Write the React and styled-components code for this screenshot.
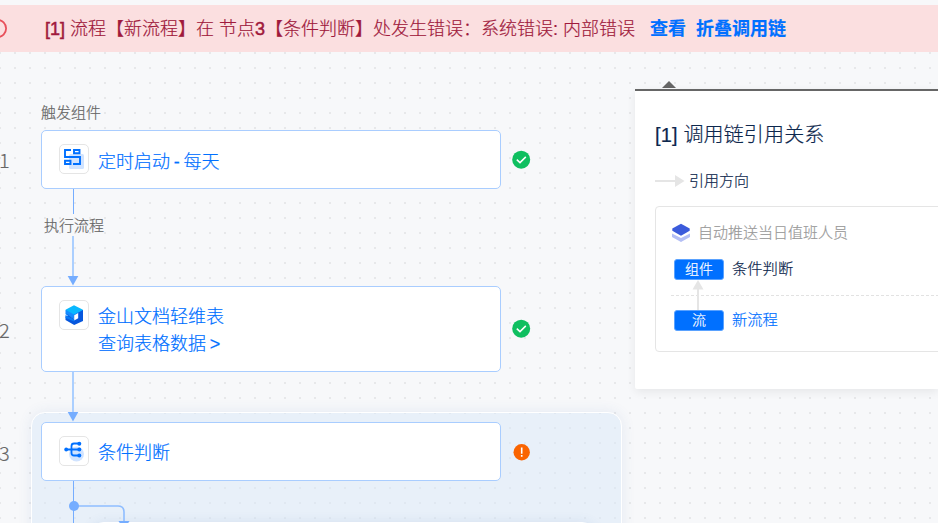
import React from 'react'
import styled, { createGlobalStyle } from 'styled-components';

const GlobalStyle = createGlobalStyle`
  * {
    box-sizing: border-box;
  }
  body {
    margin: 0;
    overflow: hidden;
    background-color: #f7f8fa;
    font-family: "Liberation Sans", "Noto Sans CJK SC", sans-serif;
    font-weight: 300;
    -webkit-text-stroke: 0.2px currentColor;
  }
  svg {
    display: block;
    flex: none;
  }
`
const Page = styled.div`
  width: 938px;
  height: 523px;
  padding-top: 5px;
  overflow: hidden;
`
const Banner = styled.div`
  height: 47px;
  display: flex;
  align-items: center;
  background-color: #fbdfe0;
  color: #a0193c;
  font-size: 18px;
  line-height: 26px;
  white-space: pre;
`
const BannerText = styled.div`
  width: 605px;
  margin-left: 37px;
  b {
    font-weight: 400;
    -webkit-text-stroke: 0.5px currentColor;
  }
`
const BannerLink = styled.a`
  margin-right: 10px;
  color: #0070ff;
  font-weight: 700;
`
const Canvas = styled.main`
  height: 471px;
  display: flex;
  align-items: flex-start;
  background-image: radial-gradient(circle at 1px 1px, #e7e8ea 1px, transparent 1.4px);
  background-size: 15px 15px;
  background-position: -1px 0;
`
const Flow = styled.div`
  width: 635px;
  padding-top: 47px;
`
const FlowLabel = styled.div`
  height: ${(props) => props.$height}px;
  padding-left: ${(props) => props.$left}px;
  color: #666;
  font-size: 15px;
  line-height: ${(props) => props.$height}px;
`
const TriggerLabel = styled(FlowLabel)`
  margin-bottom: 4px;
`
const StageLabel = styled(FlowLabel)`
  padding-top: 1px;
`
const Step = styled.div`
  display: grid;
  grid-template-columns: 41px 460px 1fr;
  align-items: center;
`
const StepNumber = styled.div`
  margin-left: -1px;
  padding-top: ${(props) => props.$top || 0}px;
  color: #666;
  font-family: "Noto Sans CJK SC", sans-serif;
  font-size: 20px;
  line-height: 26px;
`
const Card = styled.div`
  height: ${(props) => props.$height}px;
  padding: 13px 17px;
  display: flex;
  gap: 9px;
  background-color: #fff;
  border: 1px solid #a9cdff;
  border-radius: 5px;
`
const IconBox = styled.div`
  width: 30px;
  height: 30px;
  display: flex;
  align-items: center;
  justify-content: center;
  border: 1px solid #e5e5e5;
  border-radius: 5px;
`
const CardTitle = styled.div`
  padding-top: ${(props) => props.$top}px;
  color: #0070ff;
  font-size: 18px;
  line-height: 27px;
  word-spacing: -1.2px;
`
const Status = styled.div`
  padding-left: 11px;
`
const Connector = styled.svg`
  margin-left: 64px;
  margin-bottom: ${(props) => props.$overlap || 0}px;
  position: relative;
  z-index: 1;
`
const Group = styled.section`
  width: 591px;
  height: 150px;
  margin-left: 31px;
  padding-top: 9px;
  background-color: rgba(217, 232, 248, 0.5);
  border: 1px solid #fff;
  border-radius: 14px;
  box-shadow: 0 0 14px rgba(60, 100, 170, 0.1);
`
const GroupStep = styled(Step)`
  margin-left: -32px;
`
const Branch = styled.div`
  height: 60px;
  display: flex;
`
const BranchLines = styled.svg`
  margin-left: 32px;
  position: relative;
  z-index: 1;
`
const BranchGroup = styled.div`
  width: 506px;
  height: 30px;
  margin: 41px 0 0 -54px;
  background-color: rgba(219, 232, 248, 0.5);
  border: 1px solid #fff;
  border-radius: 14px;
  box-shadow: 0 0 12px rgba(60, 100, 170, 0.1);
`
const ChainPopup = styled.aside`
  width: 303px;
  padding-top: 29px;
`
const PopupArrow = styled.div`
  width: 0;
  height: 0;
  margin-left: 27px;
  border: 7px solid transparent;
  border-top: 0;
  border-bottom-color: #666;
`
const Popup = styled.div`
  height: 300px;
  margin-top: 1px;
  padding: 28px 0 0 20px;
  background-color: #fff;
  border-top: 2px solid #666;
  border-radius: 0 0 0 2px;
  box-shadow: 0 3px 10px rgba(0, 0, 0, 0.07);
  color: #0d274d;
`
const PopupTitle = styled.div`
  height: 32px;
  font-size: 20px;
  line-height: 32px;
  letter-spacing: 0.15px;
  white-space: pre;
`
const Direction = styled.div`
  height: 20px;
  margin-top: 20px;
  display: flex;
  align-items: center;
  gap: 4px;
  font-size: 15px;
  line-height: 20px;
`
const Label = styled.span`
  padding-bottom: ${(props) => props.$lift || 4}px;
`
const ChainBox = styled.div`
  width: 320px;
  height: 146px;
  margin-top: 15px;
  padding: 15px 15px 0;
  border: 1px solid #e5e5e5;
  border-radius: 4px;
`
const ChainName = styled.div`
  height: 22px;
  margin-bottom: 15px;
  display: flex;
  align-items: center;
  gap: 7px;
  color: #999;
  font-size: 15px;
`
const ChainRow = styled.div`
  height: 21px;
  padding-left: 3px;
  display: flex;
  align-items: center;
  gap: 8px;
  color: ${(props) => props.$color};
  font-size: 15.3px;
`
const Tag = styled.span`
  width: 50px;
  height: 21px;
  background-color: #0070ff;
  border: 1px solid #5aa2ff;
  border-radius: 3px;
  color: #fff;
  font-size: 14px;
  line-height: 19px;
  text-align: center;
`
const ChainLink = styled.div`
  height: 30px;
  padding-left: 21px;
  background: repeating-linear-gradient(90deg, #e2e2e2 0 3px, transparent 3px 5px) 0 15px / 100% 1px no-repeat;
`

const ErrorIcon = () => (
  <svg width="8" height="20" viewBox="0 0 8 20">
    <circle cx="-2.5" cy="9.5" r="8.6" fill="none" stroke="#e8505b" strokeWidth="1.8" />
  </svg>
)

const SuccessIcon = () => (
  <svg width="20" height="20" viewBox="0 0 20 20">
    <circle cx="9.2" cy="9.7" r="9" fill="#0fbf60" />
    <path d="M4.8 9.6 8 12.6 13.8 6.9" fill="none" stroke="#fff" strokeWidth="1.5" />
  </svg>
)

const WarningIcon = () => (
  <svg width="20" height="20" viewBox="0 0 20 20">
    <circle cx="9.7" cy="10.3" r="8.2" fill="#fa6400" />
    <path d="M9.7 5.5v6.2M9.7 13v1.8" stroke="#fff" strokeWidth="1.6" />
  </svg>
)

const TimerIcon = () => (
  <svg width="28" height="28" viewBox="0 0 28 28">
    <rect x="9" y="9" width="15" height="15" rx="1.5" fill="#d0e3ff" />
    <path d="M11 5H5v7h15v7h-7M14 5h5.5v3.2H14zM5 15.8h5.5V19H5z" fill="none" stroke="#0070ff" strokeWidth="1.9" />
  </svg>
)

const TableIcon = () => (
  <svg width="28" height="28" viewBox="0 0 28 28">
    <path d="M5.5 9v4.2L14 18l9-4V9z" fill="#148cff" />
    <path d="M5.5 12.5 9 14l-3.5 1.5V19l8.7 5 8.8-4V9l-8.8 5v4z" fill="#0757dd" />
    <path d="m14 4.2 9 4.5-9 4.8-8.5-4.8z" fill="#08b8ff" />
    <path d="m14.2 14.2 4-2.2v5.2l-4 2.2z" fill="#fff" />
    <path d="m5.5 14 8.7 4.5v2L5.5 17z" fill="#087af6" />
  </svg>
)

const ConditionIcon = () => (
  <svg width="28" height="28" viewBox="0 0 28 28">
    <circle cx="16.5" cy="17" r="7.5" fill="#d0e3ff" />
    <path d="M5 12.5h14M19 6.5h-5q-2.5 0-2.5 2.5v7q0 2.5 2.5 2.5h5" fill="none" stroke="#0070ff" strokeWidth="1.8" />
    <circle cx="6.2" cy="12.5" r="1.9" fill="#0070ff" />
    <circle cx="19.3" cy="6.7" r="2" fill="#0070ff" />
    <circle cx="19.3" cy="12.5" r="2" fill="#0070ff" />
    <circle cx="19.3" cy="18.5" r="2" fill="#0070ff" />
  </svg>
)

const StackIcon = () => (
  <svg width="20" height="20" viewBox="0 0 20 20">
    <path d="m1 10.5 9 4.5 9-4.5V14l-9 5-9-5z" fill="#b4bff5" />
    <path d="M10 .8 18.7 5.6v2.2L10 12.8 1.3 7.8V5.6z" fill="#3b5bdb" />
  </svg>
)

const DownArrow = ({ height, overlap }) => (
  <Connector width="20" height={height} $overlap={overlap}>
    <path d={`M9 0v${height - 9}`} stroke="#abcfff" strokeWidth="2" />
    <path d={`M3.7 ${height - 10}h10.6l-5.3 9.5z`} fill="#75adff" />
  </Connector>
)

const App = () => {
  return (
    <Page>
      <GlobalStyle />
      <Banner>
        <ErrorIcon />
        <BannerText><b>[1]</b> 流程【新流程】在 节点<b>3</b>【条件判断】处发生错误：系统错误: 内部错误</BannerText>
        <BannerLink>查看</BannerLink>
        <BannerLink>折叠调用链</BannerLink>
      </Banner>
      <Canvas>
        <Flow>
          <TriggerLabel $height={27} $left={41}>触发组件</TriggerLabel>
          <Step>
            <StepNumber>1</StepNumber>
            <Card $height={59}>
              <IconBox><TimerIcon /></IconBox>
              <CardTitle $top={5}>定时启动 - 每天</CardTitle>
            </Card>
            <Status><SuccessIcon /></Status>
          </Step>
          <Connector width="20" height="25">
            <path d="M9.5 0v25" stroke="#75adff" />
          </Connector>
          <StageLabel $height={22} $left={44}>执行流程</StageLabel>
          <DownArrow height={50} />
          <Step>
            <StepNumber $top={2}>2</StepNumber>
            <Card $height={86}>
              <IconBox><TableIcon /></IconBox>
              <CardTitle $top={4}>金山文档轻维表<br />查询表格数据 &gt;</CardTitle>
            </Card>
            <Status><SuccessIcon /></Status>
          </Step>
          <DownArrow height={50} overlap={-10} />
          <Group>
            <GroupStep>
              <StepNumber $top={2}>3</StepNumber>
              <Card $height={59}>
                <IconBox><ConditionIcon /></IconBox>
                <CardTitle $top={4}>条件判断</CardTitle>
              </Card>
              <Status><WarningIcon /></Status>
            </GroupStep>
            <Branch>
              <BranchLines width="80" height="60">
                <path d="M9.5 0v60" stroke="#75adff" />
                <path d="M10 25h44q6 0 6 6v10" fill="none" stroke="#8fbdff" strokeWidth="1.6" />
                <circle cx="10" cy="25" r="5" fill="#75adff" />
                <path d="M54.5 40h11l-5.5 9z" fill="#75adff" />
              </BranchLines>
              <BranchGroup />
            </Branch>
          </Group>
        </Flow>
        <ChainPopup>
          <PopupArrow />
          <Popup>
            <PopupTitle>[1] 调用链引用关系</PopupTitle>
            <Direction>
              <svg width="30" height="14">
                <path d="M0 7h21" stroke="#e5e5e5" strokeWidth="2" />
                <path d="M20 1v12l9.5-6z" fill="#e5e5e5" />
              </svg>
              <Label $lift={1}>引用方向</Label>
            </Direction>
            <ChainBox>
              <ChainName><StackIcon /><Label>自动推送当日值班人员</Label></ChainName>
              <ChainRow $color="#0d274d"><Tag>组件</Tag><Label $lift={5}>条件判断</Label></ChainRow>
              <ChainLink>
                <svg width="12" height="30">
                  <path d="M6 8v22" stroke="#e5e5e5" strokeWidth="2" />
                  <path d="M.5 9.5h11L6 0z" fill="#e5e5e5" />
                </svg>
              </ChainLink>
              <ChainRow $color="#0070ff"><Tag>流</Tag><Label $lift={5}>新流程</Label></ChainRow>
            </ChainBox>
          </Popup>
        </ChainPopup>
      </Canvas>
    </Page>
  )
}

export default App
